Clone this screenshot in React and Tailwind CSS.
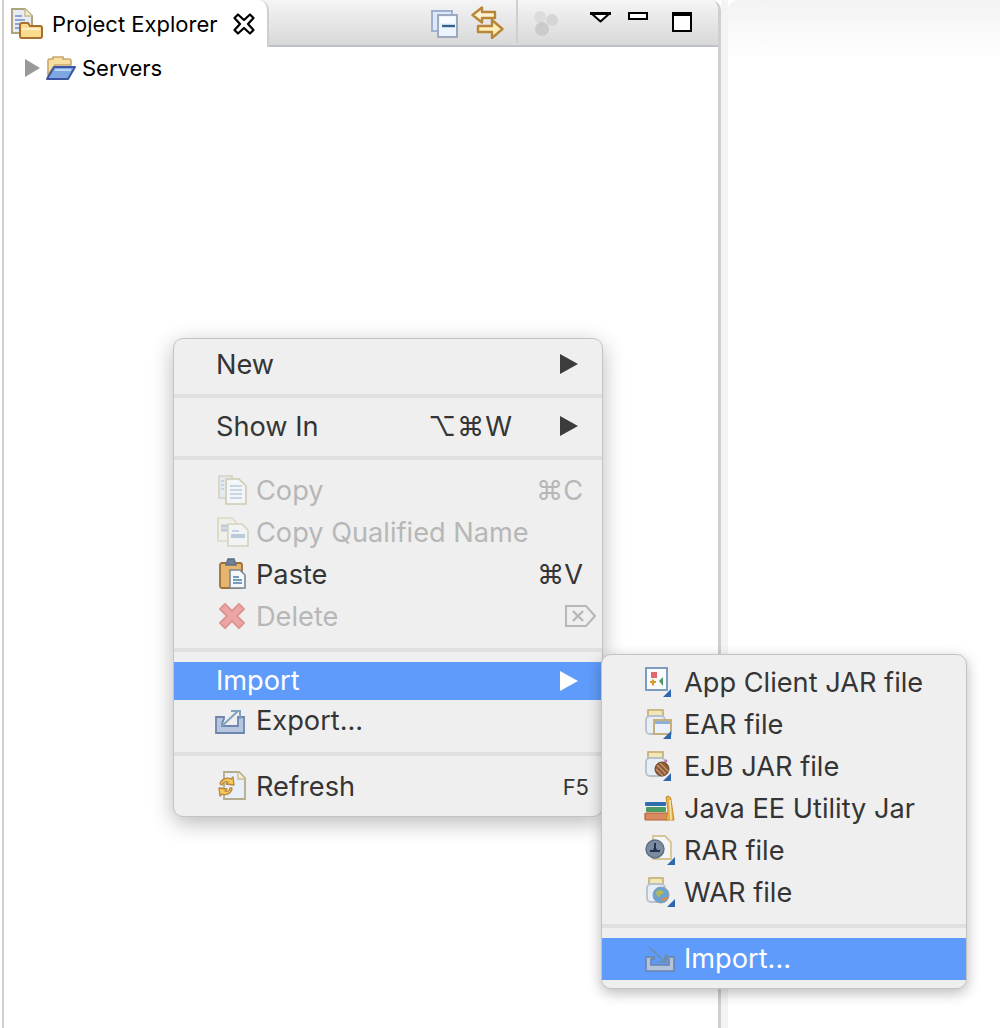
import React from "react";

const IconBox = ({ w = 32, h = 32, children, className = "" }) => (
  <svg width={w} height={h} viewBox={`0 0 ${w} ${h}`} className={`shrink-0 ${className}`}>{children}</svg>
);

const ProjectIcon = () => (
  <IconBox w={32} h={32}>
    <path d="M1 1h13l7 7v17H1z" fill="#e6ebf4" stroke="#b0a47e" strokeWidth="2" />
    <path d="M14 1v7h7" fill="#f7efd2" stroke="#c9bd92" strokeWidth="1.5" />
    <path d="M4 8h7M4 12h10M4 16h8M4 20h6" stroke="#6f93c2" strokeWidth="1.6" />
    <path d="M9 17a2 2 0 0 1 2-2h6l2 3h10a2 2 0 0 1 2 2v8a2 2 0 0 1-2 2H11a2 2 0 0 1-2-2z" fill="#fbdc8f" stroke="#a9702d" strokeWidth="2" />
    <path d="M11 21h18" stroke="#fdf0c6" strokeWidth="2" />
  </IconBox>
);

const CloseIcon = () => (
  <IconBox w={22} h={22}>
    <path d="M1.5 5L5 1.5 11 7l6-5.5L20.5 5 15 11l5.5 6-3.5 3.5L11 15l-6 5.5L1.5 17 7 11z" fill="#fff" stroke="#000" strokeWidth="2.2" strokeLinejoin="round" />
  </IconBox>
);

const OpenFolder = () => (
  <IconBox w={32} h={26}>
    <path d="M3 20V6a2 2 0 0 1 2-2h3V2h10v2h6a2 2 0 0 1 2 2v4H10z" fill="#f7dfa3" stroke="#c9a76a" strokeWidth="1.6" />
    <path d="M2 24l7-12h21l-7 12z" fill="#7fa8e2" stroke="#3c55a5" strokeWidth="2" strokeLinejoin="round" />
    <path d="M10 15h16" stroke="#bdd4f3" strokeWidth="2" />
  </IconBox>
);

const CollapseIcon = () => (
  <IconBox w={27} h={28}>
    <rect x="1" y="1" width="20" height="20" fill="#dbe9f8" stroke="#9fb0d0" strokeWidth="2" />
    <rect x="7" y="5" width="19" height="22" fill="#eaf4fd" stroke="#9ea9bf" strokeWidth="2" />
    <path d="M9 7h15v6H9z" fill="#f9fcff" />
    <path d="M11 16h13" stroke="#34608f" strokeWidth="2.4" />
  </IconBox>
);

const LinkIcon = () => (
  <IconBox w={33} h={33}>
    <path d="M1.5 9L11 1.5V6h13v6H11v4.5z" fill="#fdf3cf" stroke="#b8863a" strokeWidth="2.4" strokeLinejoin="round" />
    <path d="M31.5 23L21 14v6H7v6h14v6z" fill="#fdeeb8" stroke="#b8863a" strokeWidth="2.4" strokeLinejoin="round" />
  </IconBox>
);

const DotsIcon = () => (
  <IconBox w={28} h={28}>
    <circle cx="8" cy="8" r="6" fill="#dcdcdc" />
    <circle cx="20" cy="11" r="6" fill="#d6d6d6" />
    <circle cx="10" cy="20" r="7" fill="#cbcbcb" />
  </IconBox>
);

const DropIcon = () => (
  <IconBox w={21} h={11}>
    <path d="M1.5 1.5h18L10.5 9.5z" fill="#fff" stroke="#000" strokeWidth="2" strokeLinejoin="round" />
    <path d="M0 1.5h21" stroke="#000" strokeWidth="3" />
  </IconBox>
);

const Arrow = ({ color = "#3c3c3c" }) => (
  <svg width="18" height="20" viewBox="0 0 18 20" className="shrink-0"><path d="M0 0l18 10L0 20z" fill={color} /></svg>
);

const CopyIcon = () => (
  <IconBox w={30} h={30} className="ml-[2px]">
    <path d="M1 1h13v22H1z" fill="#e6ebf1" stroke="#d4d1bf" strokeWidth="1.6" />
    <path d="M8 4h13l7 7v18H8z" fill="#f3f6f9" stroke="#cfcab0" strokeWidth="1.6" />
    <path d="M12 11h12M12 15h12M12 19h12M12 23h12" stroke="#bccada" strokeWidth="1.6" />
    <path d="M3 6h3M3 10h3M3 14h3" stroke="#bccada" strokeWidth="1.4" />
  </IconBox>
);

const CopyQIcon = () => (
  <IconBox w={32} h={30} className="ml-[1px]">
    <path d="M1 1h14l4 4v19H1z" fill="#eff0ea" stroke="#ddd8c2" strokeWidth="1.6" />
    <path d="M4 9h11M4 13h11" stroke="#bccada" strokeWidth="3" />
    <path d="M11 7h14l6 6v16H11z" fill="#f1f3f5" stroke="#d6d2bd" strokeWidth="1.6" />
    <path d="M14 19h14" stroke="#bccada" strokeWidth="4" />
    <path d="M15 14h7" stroke="#bccada" strokeWidth="1.6" />
  </IconBox>
);

const PasteIcon = () => (
  <IconBox w={28} h={32} className="ml-[3px]">
    <rect x="1" y="5" width="22" height="25" rx="2" fill="#e6b46c" stroke="#9d7038" strokeWidth="1.8" />
    <path d="M7 7l2-6h6l2 6z" fill="#6f8097" stroke="#5d6d85" strokeWidth="1.4" />
    <path d="M11 12h10l5 5v13H11z" fill="#f4f8fb" stroke="#7a8794" strokeWidth="1.6" />
    <path d="M14 19h6M14 22h9M14 25h9" stroke="#4f7ba8" strokeWidth="1.6" />
  </IconBox>
);

const DeleteIcon = () => (
  <IconBox w={28} h={28} className="ml-[2px]">
    <path d="M7 2l7 7 7-7 5 5-7 7 7 7-5 5-7-7-7 7-5-5 7-7-7-7z" fill="#eba5a5" stroke="#e09595" strokeWidth="2" strokeLinejoin="round" />
  </IconBox>
);

const ExportIcon = () => (
  <IconBox w={32} h={28} className="-ml-[2px]">
    <path d="M2 10h8v2c-2 3-2 4-2 7h16v-7h0v-2h6v16H2z" fill="#b7c6de" stroke="#6d86ad" strokeWidth="1.8" />
    <path d="M8 19L24 4" stroke="#7fa3bd" strokeWidth="2" />
    <path d="M17 4h9v8" fill="none" stroke="#7fa3bd" strokeWidth="2" />
  </IconBox>
);

const RefreshIcon = () => (
  <IconBox w={30} h={30} className="ml-[1px]">
    <path d="M7 1h15l6 6v21H7z" fill="#e9eff8" stroke="#b5ac8c" strokeWidth="1.8" />
    <path d="M21 1v7h7" fill="#f7efd2" stroke="#c9bd92" strokeWidth="1.4" />
    <path d="M3 13c1-5 7-7 11-5l2-2 1 8-8-1 2-2c-2-1-5 0-6 3z" fill="#f5c85a" stroke="#b9853a" strokeWidth="1.3" strokeLinejoin="round" />
    <path d="M15 17c0 5-6 8-10 6l-2 2-1-8 8 1-2 2c2 1 5 0 5-3z" fill="#f5c85a" stroke="#b9853a" strokeWidth="1.3" strokeLinejoin="round" />
  </IconBox>
);

const DelKey = () => (
  <svg width="31" height="22" viewBox="0 0 31 22" className="shrink-0">
    <path d="M1 1h20l9 10-9 10H1z" fill="none" stroke="#b7b7b7" strokeWidth="2" />
    <path d="M8 6l10 10M18 6L8 16" stroke="#b7b7b7" strokeWidth="2.4" />
  </svg>
);

const Corner = () => <path d="M18 30h8v-8z" fill="#2f66ad" />;

const AppClientIcon = () => (
  <IconBox w={30} h={30} className="ml-[1px]">
    <rect x="1" y="1" width="21" height="22" fill="#fafbfd" stroke="#7d9dc0" strokeWidth="2" />
    <rect x="6" y="5" width="6" height="6" fill="#e2686f" />
    <path d="M5 15h6M8 12.5v6" stroke="#d49a2a" strokeWidth="2.2" />
    <path d="M14 14l4-4v9z" fill="#4d9a66" />
    <Corner />
  </IconBox>
);

const JarBase = ({ children }) => (
  <>
    <rect x="3" y="1" width="15" height="6" fill="#f2e7b8" stroke="#c4ad6a" strokeWidth="1.6" />
    <rect x="1" y="7" width="19" height="18" rx="4" fill="#e8eef6" stroke="#b7c0cc" strokeWidth="1.8" />
    {children}
    <Corner />
  </>
);

const EarIcon = () => (
  <IconBox w={30} h={30} className="ml-[1px]">
    <JarBase>
      <rect x="9" y="11" width="17" height="14" fill="#eaf1fa" stroke="#c2aa6c" strokeWidth="1.8" />
      <rect x="10" y="12" width="15" height="3" fill="#8fb0d6" />
    </JarBase>
  </IconBox>
);

const EjbIcon = () => (
  <IconBox w={30} h={30} className="ml-[1px]">
    <JarBase>
      <circle cx="17" cy="18" r="7" fill="#8d5a3a" stroke="#6a3f25" strokeWidth="1" />
      <path d="M12 14l9 9M15 12l9 9M11 18l7 7" stroke="#c79a72" strokeWidth="1.2" />
      <circle cx="21" cy="10" r="1.4" fill="#d168a8" />
    </JarBase>
  </IconBox>
);

const BooksIcon = () => (
  <IconBox w={32} h={26}>
    <rect x="1" y="7" width="21" height="4" rx="1" fill="#2f6fb0" />
    <rect x="2" y="12" width="20" height="5" rx="1" fill="#4d9a62" />
    <rect x="1" y="18" width="23" height="7" rx="1" fill="#d98a5e" stroke="#b45d35" strokeWidth="1.2" />
    <path d="M22 2c3-2 5 0 5 3l3 20h-8l2-10z" fill="#e9b34a" stroke="#c58a25" strokeWidth="1" />
    <path d="M26 5l1 20" stroke="#f9e6ad" strokeWidth="1.5" />
  </IconBox>
);

const RarIcon = () => (
  <IconBox w={32} h={30} className="ml-[1px]">
    <path d="M8 1h12l6 6v17H8z" fill="#f2f4f8" stroke="#d3c693" strokeWidth="1.8" />
    <circle cx="10" cy="14" r="9" fill="#7d8ba1" stroke="#5f6e85" strokeWidth="1.4" />
    <path d="M10 8v7M5 16h10" stroke="#25344e" strokeWidth="2" />
    <circle cx="10" cy="15" r="2" fill="#25344e" />
    <path d="M22 30h8v-8z" fill="#2f66ad" />
  </IconBox>
);

const WarIcon = () => (
  <IconBox w={32} h={30} className="ml-[1px]">
    <rect x="4" y="1" width="14" height="6" fill="#f2e7b8" stroke="#c4ad6a" strokeWidth="1.6" />
    <rect x="2" y="7" width="18" height="18" rx="4" fill="#e8eef6" stroke="#b7c0cc" strokeWidth="1.8" />
    <circle cx="16" cy="18" r="8" fill="#6aa3cf" stroke="#8d9eb3" strokeWidth="1" />
    <path d="M11 15c3-3 6-2 8 0-1 3-4 2-5 5-2 0-3-2-3-5z" fill="#b0b85a" />
    <path d="M17 22c2-2 4-2 6-2-1 3-3 4-6 4z" fill="#d78a4f" />
    <path d="M22 30h8v-8z" fill="#2f66ad" />
  </IconBox>
);

const ImportIcon = () => (
  <IconBox w={32} h={26}>
    <path d="M2 11h8v2h-3v6h18v-6h-4v-2h9v14H2z" fill="#b3c3dc" stroke="#6b84ab" strokeWidth="1.6" />
    <path d="M5 1l16 15" stroke="#6f8ea6" strokeWidth="1.6" />
    <path d="M13 16h9v-8" fill="none" stroke="#6f8ea6" strokeWidth="1.6" />
  </IconBox>
);

const Row = ({ h = 42, icon, indent = true, label, disabled, active, shortcut, arrow, pr = "pr-[24px]" }) => (
  <div
    className={`flex items-center shrink-0 pl-[42px] ${pr} ${active ? "bg-[#5f9bfa] text-white" : disabled ? "text-[#b7b7b7]" : "text-[#353535]"}`}
    style={{ height: h }}
  >
    {indent && <span className="flex items-center w-[40px] shrink-0">{icon}</span>}
    <span className={`flex-1 whitespace-nowrap ${active ? "" : "pt-[2px]"}`}>{label}</span>
    {shortcut}
    {arrow && <Arrow color={active ? "#ffffff" : "#3c3c3c"} />}
  </div>
);

const Shortcut = ({ children, className = "" }) => (
  <span className={`whitespace-nowrap pt-[2px] font-['Inter','DejaVu_Sans',sans-serif] ${className}`}>{children}</span>
);

const Sep = ({ mb = "mb-[9px]" }) => <div className={`h-[4px] mt-[11px] ${mb} bg-[#e0e0e0] shrink-0`} />;

const SubRow = ({ icon, label, h = 42, active }) => (
  <div
    className={`flex items-center shrink-0 pl-[42px] ${active ? "bg-[#5f9bfa] text-white" : "text-[#353535]"}`}
    style={{ height: h }}
  >
    <span className="flex items-center w-[40px] shrink-0">{icon}</span>
    <span className={`whitespace-nowrap ${active ? "" : "pt-[2px]"}`}>{label}</span>
  </div>
);

export default function App() {
  return (
    <div className="relative w-[1000px] h-[1028px] overflow-hidden bg-white font-['Inter','Liberation_Sans',sans-serif] flex">
      <div className="w-[721px] shrink-0 h-full pl-[2px] bg-white">
        <div className="h-full border-l-[2px] border-r-[3px] border-[#cfcfcd] flex flex-col rounded-tr-[10px]">
          <div className="h-[47px] shrink-0 flex bg-gradient-to-b from-[#f5f5f5] to-[#d8d8d8] border-b-[2px] border-[#bcc0cc] rounded-tr-[10px]">
            <div className="w-[265px] h-[47px] shrink-0 bg-white border-r-[2px] border-[#cfcfcd] rounded-tr-[10px] flex items-start pl-[7px] pt-[8px]">
              <ProjectIcon />
              <span className="ml-[9px] mt-[1px] text-[22px] leading-[30px] text-black whitespace-nowrap">Project Explorer</span>
              <span className="ml-[15px] mt-[5px]"><CloseIcon /></span>
            </div>
            <div className="flex-1 relative flex items-start">
              <span className="ml-[162px] mt-[10px]"><CollapseIcon /></span>
              <span className="ml-[13px] mt-[6px]"><LinkIcon /></span>
              <span className="ml-[12px] h-[43px] w-[2px] bg-[#cfcfcf]" />
              <span className="ml-[14px] mt-[9px]"><DotsIcon /></span>
              <span className="ml-[30px] mt-[12px]"><DropIcon /></span>
              <span className="ml-[17px] mt-[12px] w-[20px] h-[8px] border-[2px] border-black bg-white" />
              <span className="ml-[24px] mt-[12px] w-[20px] h-[20px] border-[2px] border-black border-t-[4px] bg-white" />
            </div>
          </div>
          <div className="flex-1 pt-[8px] pl-[21px]">
            <div className="flex items-center h-[26px]">
              <svg width="15" height="18" viewBox="0 0 15 18" className="shrink-0"><path d="M0 0l15 9L0 18z" fill="#999999" /></svg>
              <span className="ml-[5px]"><OpenFolder /></span>
              <span className="ml-[5px] text-[22px] text-black leading-[26px]">Servers</span>
            </div>
          </div>
        </div>
      </div>
      <div className="w-[7px] shrink-0 bg-[#f4f4f4]" />
      <div className="flex-1 bg-white rounded-tl-[10px] h-[60px] bg-gradient-to-b from-[#f3f3f3] to-white" />

      <div className="absolute left-[173px] top-[338px] w-[430px] h-[479px] bg-[#efefef] border border-[#c4c4c4] rounded-[10px] shadow-[0_6px_22px_rgba(0,0,0,0.28)] pt-[6px] flex flex-col text-[27.2px]">
        <Row h={38} indent={false} label="New" arrow />
        <Sep />
        <Row h={38} indent={false} label="Show In" arrow shortcut={<Shortcut className="mr-[47px] tracking-[1px]">⌥⌘W</Shortcut>} />
        <Sep />
        <Row icon={<CopyIcon />} label="Copy" disabled pr="pr-[19px]" shortcut={<Shortcut>⌘C</Shortcut>} />
        <Row icon={<CopyQIcon />} label="Copy Qualified Name" disabled />
        <Row icon={<PasteIcon />} label="Paste" pr="pr-[19px]" shortcut={<Shortcut>⌘V</Shortcut>} />
        <div className="flex items-center shrink-0 h-[42px] pl-[42px] pr-[6px] text-[#b7b7b7]">
          <span className="flex items-center w-[40px] shrink-0"><DeleteIcon /></span>
          <span className="flex-1 pt-[2px]">Delete</span>
          <DelKey />
        </div>
        <Sep mb="mb-[10px]" />
        <Row h={38} indent={false} label="Import" active arrow />
        <Row h={41} icon={<ExportIcon />} label="Export..." />
        <Sep mb="mb-[11px]" />
        <Row h={38} icon={<RefreshIcon />} label="Refresh" pr="pr-[13px]" shortcut={<span className="text-[22px] pt-[2px]">F5</span>} />
      </div>

      <div className="absolute left-[601px] top-[654px] w-[366px] h-[335px] bg-[#efefef] border border-[#c4c4c4] rounded-[10px] shadow-[0_4px_14px_rgba(0,0,0,0.28)] pt-[6px] flex flex-col text-[27.2px]">
        <SubRow icon={<AppClientIcon />} label="App Client JAR file" />
        <SubRow icon={<EarIcon />} label="EAR file" />
        <SubRow icon={<EjbIcon />} label="EJB JAR file" />
        <SubRow icon={<BooksIcon />} label="Java EE Utility Jar" />
        <SubRow icon={<RarIcon />} label="RAR file" />
        <SubRow icon={<WarIcon />} label="WAR file" />
        <Sep mb="mb-[10px]" />
        <SubRow h={42} icon={<ImportIcon />} label="Import..." active />
      </div>
    </div>
  );
}
